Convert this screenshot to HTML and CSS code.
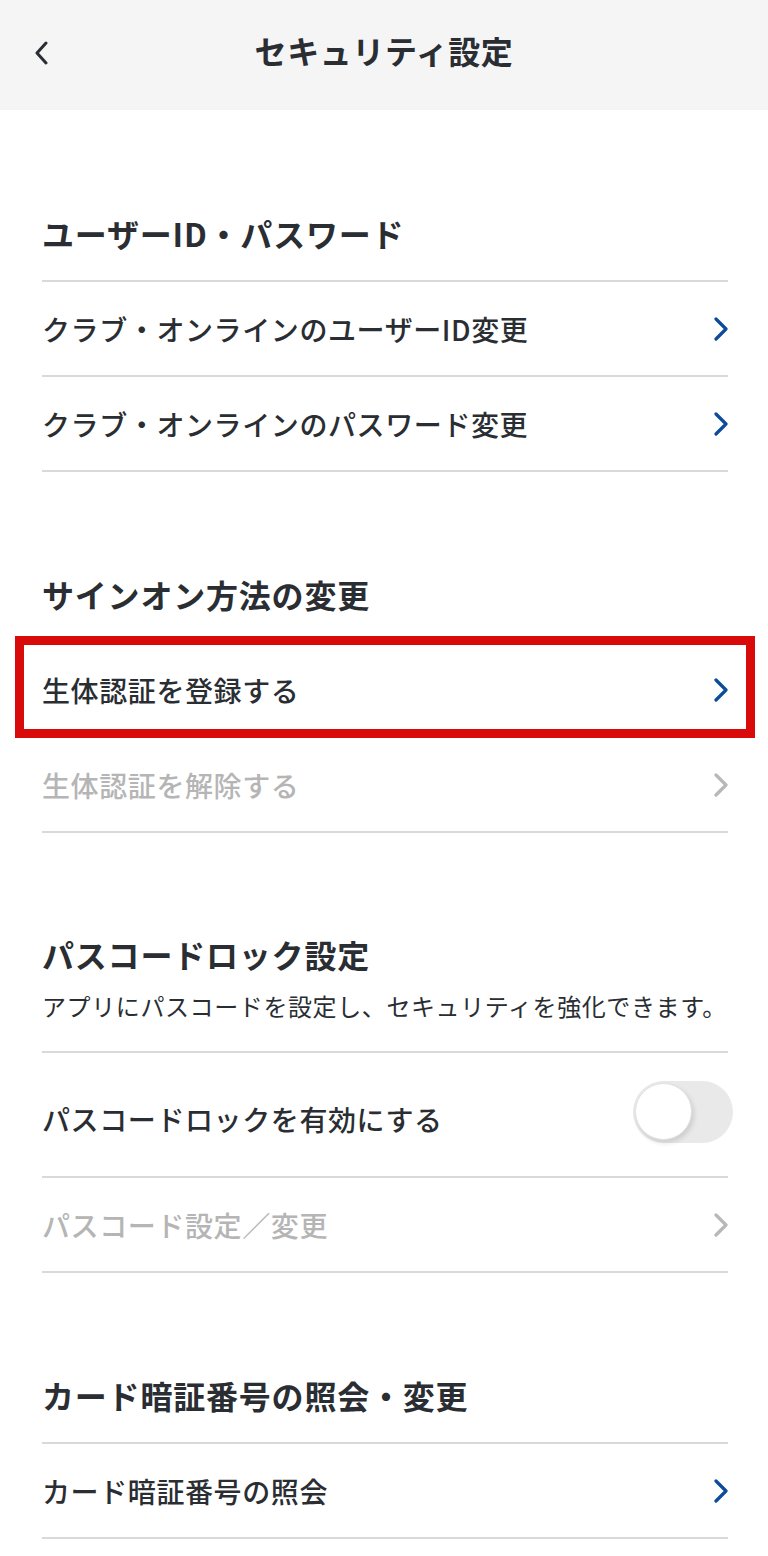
FILE: index.html
```html
<!DOCTYPE html>
<html lang="ja">
<head>
<meta charset="utf-8">
<title>セキュリティ設定</title>
<link rel="stylesheet" href="styles.css">
</head>
<body>
<header class="topbar">
  <button class="back" aria-label="戻る">
    <svg width="14" height="24" viewBox="0 0 14 24"><polyline points="11,2 2,12 11,22" fill="none" stroke="#2a2e33" stroke-width="3" stroke-linecap="round" stroke-linejoin="round"/></svg>
  </button>
  <h1 class="title">セキュリティ設定</h1>
</header>

<main class="content">
  <section class="section">
    <h2 class="section-title">ユーザーID・パスワード</h2>
    <ul class="list">
      <li class="row"><span>クラブ・オンラインのユーザーID変更</span><svg class="chev" width="16" height="24" viewBox="0 0 16 24"><polyline points="3,2 13,12 3,22" /></svg></li>
      <li class="row"><span>クラブ・オンラインのパスワード変更</span><svg class="chev" width="16" height="24" viewBox="0 0 16 24"><polyline points="3,2 13,12 3,22" /></svg></li>
    </ul>
  </section>

  <section class="section">
    <h2 class="section-title">サインオン方法の変更</h2>
    <ul class="list">
      <li class="row highlight"><span>生体認証を登録する</span><svg class="chev" width="16" height="24" viewBox="0 0 16 24"><polyline points="3,2 13,12 3,22" /></svg></li>
      <li class="row disabled"><span>生体認証を解除する</span><svg class="chev" width="16" height="24" viewBox="0 0 16 24"><polyline points="3,2 13,12 3,22" /></svg></li>
    </ul>
  </section>

  <section class="section">
    <div class="section-head">
      <h2 class="section-title compact">パスコードロック設定</h2>
      <p class="desc">アプリにパスコードを設定し、セキュリティを強化できます。</p>
    </div>
    <ul class="list">
      <li class="row tall"><span>パスコードロックを有効にする</span><span class="toggle"><span class="knob"></span></span></li>
      <li class="row disabled"><span>パスコード設定／変更</span><svg class="chev" width="16" height="24" viewBox="0 0 16 24"><polyline points="3,2 13,12 3,22" /></svg></li>
    </ul>
  </section>

  <section class="section">
    <h2 class="section-title">カード暗証番号の照会・変更</h2>
    <ul class="list">
      <li class="row"><span>カード暗証番号の照会</span><svg class="chev" width="16" height="24" viewBox="0 0 16 24"><polyline points="3,2 13,12 3,22" /></svg></li>
    </ul>
  </section>
</main>
</body>
</html>
```

FILE: styles.css
```css
* {
  box-sizing: border-box;
}

html, body {
  margin: 0;
  padding: 0;
  background: #ffffff;
}

body {
  font-family: "Noto Sans CJK JP", "Noto Sans", sans-serif;
  color: #2a2e33;
  width: 768px;
  min-height: 1556px;
  overflow: hidden;
}

.topbar {
  height: 110px;
  background: #f5f5f5;
  display: flex;
  align-items: center;
  justify-content: center;
  position: relative;
}

.back {
  position: absolute;
  left: 32px;
  top: 40px;
  width: 20px;
  height: 26px;
  padding: 0;
  border: 0;
  background: transparent;
  display: flex;
  align-items: center;
  justify-content: center;
}

.title {
  margin: 0;
  font-size: 32px;
  font-weight: 700;
  line-height: 48px;
  margin-top: -10px;
  letter-spacing: 0.6px;
}

.content {
  padding: 0 40px 0 42px;
}

.section {
  padding-top: 75px;
}

.section:first-child {
  padding-top: 76px;
}

.section-title {
  margin: 0;
  height: 94px;
  display: flex;
  align-items: center;
  font-size: 32px;
  font-weight: 700;
  line-height: 48px;
  letter-spacing: 0.8px;
}

.section-head {
  padding-bottom: 27px;
}

.section-title.compact {
  height: auto;
  padding-top: 22px;
}

.desc {
  margin: 10px 0 0 0;
  font-size: 24px;
  line-height: 36px;
  font-weight: 400;
  letter-spacing: 0.6px;
  white-space: nowrap;
}

.list {
  list-style: none;
  margin: 0;
  padding: 0;
}

.row {
  position: relative;
  height: 95px;
  border-top: 2px solid #d9d9d9;
  display: flex;
  align-items: center;
  justify-content: space-between;
  font-size: 28px;
  font-weight: 500;
  line-height: 40px;
  letter-spacing: 0.6px;
}

.row:last-child {
  border-bottom: 2px solid #d9d9d9;
  height: 97px;
}

.row.tall {
  height: 125px;
}

.row.tall > span:first-child {
  padding-top: 8px;
}

.chev {
  margin-right: -1px;
}

.chev polyline {
  fill: none;
  stroke: #0d4b9b;
  stroke-width: 3.2;
  stroke-linecap: round;
  stroke-linejoin: round;
}

.row.disabled {
  color: #b5b5b5;
}

.row.disabled .chev polyline {
  stroke: #b8b8b8;
}

.row.highlight {
  z-index: 1;
}

.row.highlight::after {
  content: "";
  position: absolute;
  top: -7px;
  bottom: -2px;
  left: -27px;
  right: -27px;
  border: 9px solid #d80a0a;
  pointer-events: none;
}

.toggle {
  width: 100px;
  height: 62px;
  border-radius: 31px;
  background: #e9e9e9;
  margin-right: -5px;
  margin-top: -6px;
  position: relative;
  display: flex;
  align-items: center;
  padding-left: 2px;
}

.knob {
  width: 57px;
  height: 57px;
  border-radius: 50%;
  background: #ffffff;
  border: 1px solid #e2e2e2;
  box-shadow: 2px 3px 5px rgba(0, 0, 0, 0.12);
}
```
